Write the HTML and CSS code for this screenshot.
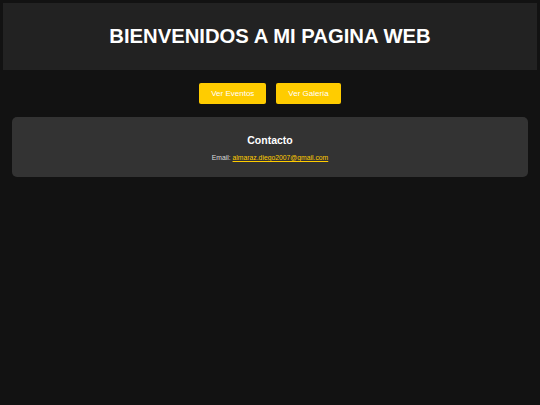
FILE: index.html
```html
<!DOCTYPE html>
<html lang="es">
<head>
<meta charset="utf-8">
<title>Mi Pagina Web</title>
<link rel="stylesheet" href="styles.css">
</head>
<body>
<header class="site-header">
  <h1 class="site-title">BIENVENIDOS A MI PAGINA WEB</h1>
</header>
<nav class="nav">
  <a class="btn" href="#">Ver Eventos</a>
  <a class="btn" href="#">Ver Galería</a>
</nav>
<section class="card">
  <h2 class="card-title">Contacto</h2>
  <p class="card-text">Email: <a class="mail" href="#">almaraz.diego2007@gmail.com</a></p>
</section>
</body>
</html>
```
FILE: styles.css
```css
* { box-sizing: border-box; }
html, body { margin: 0; padding: 0; }
body {
  background: #121212;
  font-family: "Liberation Sans", Arial, sans-serif;
  color: #fff;
  padding: 3px 3px;
  min-height: 405px;
}
.site-header {
  background: #222222;
  height: 67px;
  display: flex;
  align-items: center;
  justify-content: center;
}
.site-title {
  margin: 0;
  font-size: 20.25px;
  font-weight: bold;
  color: #fff;
}
.nav {
  display: flex;
  justify-content: center;
  gap: 10px;
  margin-top: 13px;
}
.btn {
  display: flex;
  align-items: center;
  justify-content: center;
  height: 21px;
  padding: 0 12px;
  background: #ffcc00;
  color: #fff;
  text-decoration: none;
  font-size: 8px;
  border-radius: 2px;
}
.card {
  margin: 13px 9px 0;
  height: 60px;
  background: #333333;
  border-radius: 5px;
  text-align: center;
  padding-top: 17px;
}
.card-title {
  margin: 0;
  font-size: 10.5px;
  font-weight: bold;
  line-height: 13px;
}
.card-text {
  margin: 7px 0 0;
  font-size: 6.8px;
  color: #ddd;
}
.mail {
  color: #ffcc00;
}
```
